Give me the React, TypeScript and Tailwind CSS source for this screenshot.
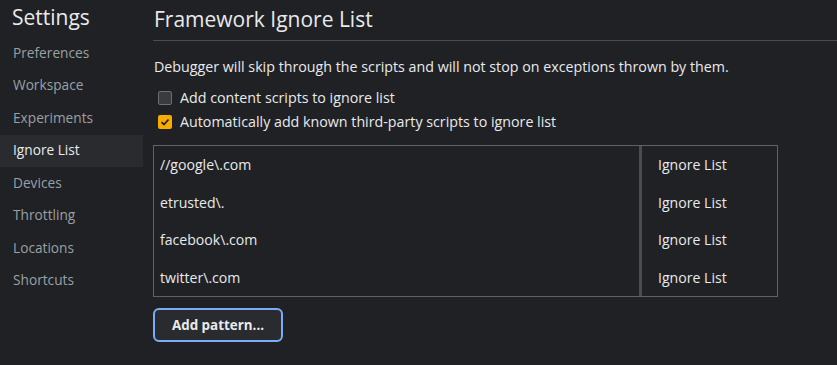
import React from "react";

const navItems = [
  "Preferences",
  "Workspace",
  "Experiments",
  "Ignore List",
  "Devices",
  "Throttling",
  "Locations",
  "Shortcuts",
];

const patterns = ["//google\\.com", "etrusted\\.", "facebook\\.com", "twitter\\.com"];

export default function App() {
  return (
    <div
      className="flex w-[837px] h-[365px] bg-[#202124] text-[#e8eaed] overflow-hidden"
      style={{ fontFamily: '"Open Sans", "Noto Sans", sans-serif' }}
    >
      <div className="w-[143px] shrink-0 flex flex-col">
        <div className="h-[37px] pl-3 pt-[3px] text-[21px] leading-[28px] text-[#e8eaed]">Settings</div>
        {navItems.map((n) => (
          <div
            key={n}
            className={
              "h-[32.5px] pl-[13px] flex items-center text-[13.7px] " +
              (n === "Ignore List" ? "bg-[#2a2b2e] text-[#e8eaed]" : "text-[#9aa0a6]")
            }
          >
            {n}
          </div>
        ))}
      </div>
      <div className="flex-1 pl-[10px] flex flex-col">
        <div className="h-[41px] border-b border-[#4a4c50] flex items-start pl-[1px] pt-[5px] text-[21px] leading-[28px]">
          Framework Ignore List
        </div>
        <div className="pl-[1px] mt-[16px] text-[14.25px] leading-[20px]">
          Debugger will skip through the scripts and will not stop on exceptions thrown by them.
        </div>
        <div className="mt-[9px] flex flex-col pl-[5px] text-[14.25px]">
          <label className="flex items-center h-[24px] gap-[8px]">
            <span className="w-[14px] h-[14px] rounded-[2px] border border-[#6b6e73] bg-[#3a3b3f]" />
            <span>Add content scripts to ignore list</span>
          </label>
          <label className="flex items-center h-[24px] gap-[8px]">
            <span className="w-[14px] h-[14px] rounded-[2px] bg-[#f9ab00] flex items-center justify-center">
              <svg width="10" height="10" viewBox="0 0 10 10">
                <path d="M1.5 5.2 L4 7.5 L8.5 2.5" fill="none" stroke="#202124" strokeWidth="1.8" />
              </svg>
            </span>
            <span>Automatically add known third-party scripts to ignore list</span>
          </label>
        </div>
        <div className="mt-[11px] w-[625px] border border-[#5f6368] flex text-[14.1px]">
          <div className="w-[488px] border-r-[3px] border-[#4a4c50] flex flex-col">
            {patterns.map((p) => (
              <div key={p} className="h-[37.5px] flex items-center pl-[6px]">
                {p}
              </div>
            ))}
          </div>
          <div className="flex-1 flex flex-col">
            {patterns.map((p) => (
              <div key={p} className="h-[37.5px] flex items-center pl-[16px]">
                Ignore List
              </div>
            ))}
          </div>
        </div>
        <div className="mt-[11px]">
          <button className="w-[130px] h-[34px] rounded-[6px] border-2 border-[#7cacf8] bg-[#2a2b2e] text-[13.4px] font-bold text-[#e8eaed]">
            Add pattern...
          </button>
        </div>
      </div>
    </div>
  );
}
